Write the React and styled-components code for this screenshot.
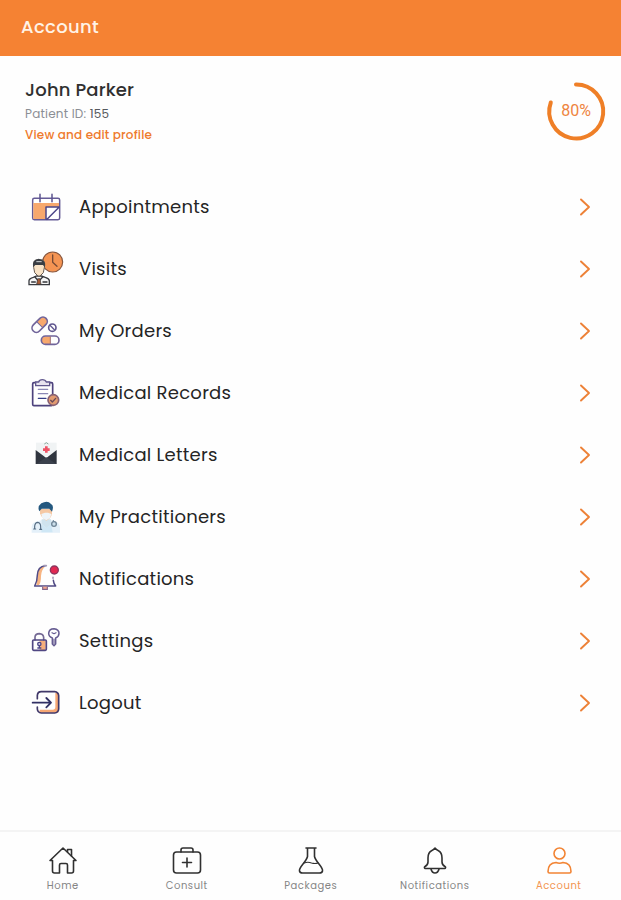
import React from 'react';
import styled, { createGlobalStyle } from 'styled-components';

const Global = createGlobalStyle`
  *, *::before, *::after { box-sizing: border-box; }
  body { margin: 0; background: #fefefe; font-family: Poppins, Inter, sans-serif; }
`;

const Screen = styled.div`
  display: flex;
  flex-direction: column;
  width: 621px;
  height: 900px;
  overflow: hidden;
`;

const Header = styled.header`
  display: flex;
  align-items: center;
  height: 56px;
  padding: 0 21px 2px;
  background: #f58233;
`;

const Title = styled.h1`
  margin: 0;
  font-size: 18px;
  font-weight: 500;
  line-height: 24px;
  letter-spacing: 0.35px;
  color: #fff3e6;
`;

const Profile = styled.section`
  display: flex;
  justify-content: space-between;
  height: 120px;
  padding: 22px 13px 0 25px;
`;

const Details = styled.div`
  display: flex;
  flex-direction: column;
  align-items: flex-start;
`;

const Name = styled.span`
  font-size: 18px;
  font-weight: 500;
  line-height: 24px;
  letter-spacing: 0.15px;
  color: #303030;
`;

const PatientId = styled.span`
  margin-top: 1px;
  font-size: 12px;
  line-height: 22px;
  letter-spacing: 0.2px;
  color: #8b8e94;
`;

const IdValue = styled.span`
  color: #56585d;
`;

const EditLink = styled.a`
  font-size: 12px;
  font-weight: 500;
  line-height: 20px;
  letter-spacing: 0.17px;
  color: #ee7a2c;
`;

const Ring = styled.div`
  display: grid;
  place-items: center;
  width: 64px;
  height: 66px;
  & > * { grid-area: 1 / 1; }
`;

const RingValue = styled.span`
  font-family: Roboto, sans-serif;
  font-size: 16px;
  line-height: 20px;
  color: #ee8440;
`;

const Menu = styled.nav`
  display: flex;
  flex-direction: column;
  flex: 1;
`;

const MenuRow = styled.a`
  display: grid;
  grid-template-columns: 36px 1fr 12px;
  column-gap: 16px;
  align-items: center;
  height: 62px;
  padding: 0 30px 0 27px;
`;

const MenuIcon = styled.svg`
  width: 36px;
  height: 36px;
  overflow: visible;
`;

const MenuLabel = styled.span`
  font-size: 18px;
  line-height: 24px;
  letter-spacing: 0.25px;
  color: #252525;
  padding-bottom: 1px;
`;

const TabBar = styled.footer`
  display: grid;
  grid-template-columns: repeat(5, 1fr);
  height: 70px;
  padding-left: 1px;
  border-top: 2px solid #f4f4f4;
`;

const Tab = styled.a`
  display: flex;
  flex-direction: column;
  align-items: center;
  padding-top: 14px;
  color: ${(p) => (p.$active ? '#f28434' : '#303030')};
`;

const TabIcon = styled.svg`
  width: 30px;
  height: 30px;
`;

const TabLabel = styled.span`
  font-size: 10px;
  line-height: 14px;
  margin-top: 3px;
  letter-spacing: 0.55px;
  margin-right: 0.5px;
  color: ${(p) => (p.$active ? '#f39450' : '#858585')};
`;

const line = { fill: 'none', strokeLinecap: 'round', strokeLinejoin: 'round' };
const navy = '#4b4588';
const peach = '#f7a86d';

const AppointmentsArt = () => (
  <>
    <rect x="53" y="55" width="81" height="64" rx="5" fill="#fff" stroke="#655b96" strokeWidth="4.5" />
    <path d="M55 69H132V81H93V117H55Z" fill={peach} />
    <path d="M94 82H131L95 117Z" fill="#fff" />
    <path d="M93 117V81H132M132 82L96 118" stroke={navy} strokeWidth="4.5" {...line} />
    <path d="M75 43V65M111 43V65" stroke="#5b538e" strokeWidth="4.5" {...line} />
  </>
);

const VisitsArt = () => (
  <>
    <circle cx="113" cy="66" r="30" fill="#f49453" stroke="#86543b" strokeWidth="3.5" />
    <path d="M113 45V67L126 79" stroke="#774a35" strokeWidth="4" {...line} />
    <path d="M42 134V122Q43 115 55 112L65 108H79L91 112Q102 115 103 122V134Z" fill="#f5f5f5" stroke="#393b40" strokeWidth="4" />
    <path d="M56 82Q53 63 63 60H83Q92 66 88 83L85 98L75 108H69L59 98Z" fill="#f8e2c6" stroke="#665a50" strokeWidth="3" />
    <path d="M55 81Q50 59 71 56Q95 59 89 82L84 75H61Z" fill="#393d43" />
    <path d="M64 65H80" stroke="#d2d6d8" strokeWidth="3" />
    <path d="M60 111L71 124L83 111M50 126H61M84 126H96" stroke="#34363a" strokeWidth="4" {...line} />
    <path d="M68 116H75L78 133H65Z" fill="#a75b36" stroke="#34363a" strokeWidth="2" />
  </>
);

const OrdersArt = () => (
  <>
    <g transform="rotate(-45 74 68)">
      <path d="M74 57H89A11 11 0 0 1 89 80H74Z" fill={peach} />
      <rect x="47" y="55" width="54" height="26" rx="13" fill="none" stroke="#70649a" strokeWidth="5" />
      <path d="M74 57V79" stroke="#70649a" strokeWidth="3" />
    </g>
    <circle cx="112" cy="77" r="11" fill="#fff" stroke="#60578f" strokeWidth="5" />
    <path d="M105 70L119 84" stroke="#60578f" strokeWidth="4" />
    <path d="M106 103H91A11 11 0 0 0 91 126H106Z" fill={peach} />
    <rect x="79" y="102" width="53" height="25" rx="12.5" fill="none" stroke="#70649a" strokeWidth="5" />
    <path d="M106 103V126" stroke="#a06f78" strokeWidth="3" />
  </>
);

const RecordsArt = () => (
  <>
    <rect x="53" y="56" width="60" height="69" rx="4" fill="#fff" stroke="#4d427d" strokeWidth="5" />
    <path d="M62 54H71Q73 47 82 47Q91 47 94 54H104V65H62Z" fill="#e8e4ef" stroke="#62598e" strokeWidth="4" />
    <path d="M70 76H98M70 89H98" stroke="#8b88b5" strokeWidth="4" {...line} />
    <path d="M70 103H93" stroke="#353e87" strokeWidth="4" {...line} />
    <circle cx="115" cy="108" r="16" fill="#e29a70" stroke="#876072" strokeWidth="5" />
    <path d="M107 109L112 114L122 103" stroke="#684956" strokeWidth="4" {...line} />
  </>
);

const LettersArt = () => (
  <>
    <path d="M63 53H125V93H63Z" fill="#f0f3f4" />
    <path d="M62 75L94 99L125 75V117H62Z" fill="#30353f" />
    <path d="M64 117L94 97L124 117Z" fill="#3b414c" />
    <path d="M90 64H98V70H104V78H98V83H90V78H84V70H90Z" fill="#ee5365" />
    <path d="M88 57L94 53L100 57" stroke="#84a699" strokeWidth="3" fill="none" />
  </>
);

const PractitionersArt = () => (
  <>
    <path d="M50 137V119Q51 106 68 103L83 98H105L119 103Q134 107 135 122V137Z" fill="#e4f0f9" />
    <path d="M80 97H108V112L95 124L80 110Z" fill="#cfe3ee" />
    <path d="M80 110L94 123L108 110L113 136H79Z" fill="#cfe7f5" />
    <path d="M75 66H111V79Q109 95 94 101Q80 94 75 79Z" fill="#f5c8a4" />
    <path d="M73 73Q66 59 79 49Q98 39 108 51Q118 55 111 74L103 65H80Z" fill="#24587f" />
    <path d="M79 81L90 77H99L109 81L105 93L94 100L82 93Z" fill="#eff5fa" />
    <path d="M59 126V117Q61 106 68 106Q77 107 77 119V127M56 126H62M74 127H80" stroke="#546c83" strokeWidth="3.5" {...line} />
    <path d="M115 99V107" stroke="#668098" strokeWidth="3" />
    <circle cx="117" cy="111" r="7" fill="#cbdfeb" stroke="#6d8395" strokeWidth="4" />
  </>
);

const NotificationsArt = () => (
  <>
    <path d="M80 53Q69 62 68 80L64 108H72Q78 101 78 81Q80 62 89 54Z" fill="#f7b482" />
    <path d="M91 50Q68 52 67 79Q67 97 59 111H122Q116 104 115 94" stroke="#514a84" strokeWidth="4.5" {...line} />
    <path d="M87 50H94M114 85V88" stroke="#a49bb7" strokeWidth="5" {...line} />
    <path d="M83 113V121H97V113" fill="#f4a58b" stroke="#84658a" strokeWidth="3.5" />
    <circle cx="118" cy="63" r="12" fill="#e22751" stroke="#8b365d" strokeWidth="4" />
  </>
);

const SettingsArt = () => (
  <>
    <path d="M74 91H92V120H74Z" fill="#f5ae7c" />
    <path d="M60 90V81Q61 71 73 71Q85 72 86 82V90" stroke="#746994" strokeWidth="5" {...line} />
    <rect x="53" y="90" width="41" height="31" rx="3" fill="none" stroke="#504783" strokeWidth="5" />
    <circle cx="73" cy="102" r="5" fill="#d2cbe1" stroke={navy} strokeWidth="4" />
    <path d="M73 107V113M67 114H79" stroke={navy} strokeWidth="4" />
    <path d="M112 84Q101 80 101 70Q102 56 117 56Q132 58 132 70Q132 80 122 84V102L117 107L112 102Z" fill="#fff" stroke="#655b91" strokeWidth="4.5" strokeLinejoin="round" />
    <path d="M111 68L117 71L123 68M117 87V102" stroke="#655b91" strokeWidth="3.5" {...line} />
  </>
);

const LogoutArt = () => (
  <>
    <path d="M121 249H130V308H74V299H113Q121 299 121 291Z" fill="#f6a774" />
    <path d="M67 266V256Q68 245 79 245H119Q130 246 131 257V297Q130 308 119 309H79Q68 308 67 297V291" stroke="#403869" strokeWidth="5" {...line} />
    <path d="M53 278H107M94 264L108 278L94 292" stroke="#302f63" strokeWidth="5.5" {...line} />
  </>
);

const menuItems = [
  { label: 'Appointments', Art: AppointmentsArt, top: 27 },
  { label: 'Visits', Art: VisitsArt, top: 33 },
  { label: 'My Orders', Art: OrdersArt, top: 33 },
  { label: 'Medical Records', Art: RecordsArt, top: 33 },
  { label: 'Medical Letters', Art: LettersArt, top: 36 },
  { label: 'My Practitioners', Art: PractitionersArt, top: 36 },
  { label: 'Notifications', Art: NotificationsArt, top: 36 },
  { label: 'Settings', Art: SettingsArt, top: 39 },
  { label: 'Logout', Art: LogoutArt, top: 225 },
];

const tabs = [
  {
    label: 'Home',
    art: (
      <>
        <path d="M2 14.5L15 2L28 14.5H25.5V25Q25.5 27 23.5 27H19.5V19Q19.5 17.5 18 17.5H13Q11.5 17.5 11.5 19V27H6.5Q4.5 27 4.5 25V14.5Z" />
        <path d="M19.5 5.8V3.5H23.5V10" />
      </>
    ),
  },
  {
    label: 'Consult',
    art: (
      <>
        <rect x="1.5" y="6" width="27" height="21" rx="3" />
        <path d="M9 6V4Q9 2 11 2H19Q21 2 21 4V6M15 12V21M10.5 16.5H19.5" />
      </>
    ),
  },
  {
    label: 'Packages',
    art: (
      <>
        <path d="M10 2H20M11.5 2.5V10.5Q11 13 7 18Q3 23 3.5 25Q4 27 6.5 27H23.5Q26 27 26.5 25Q27 23 23 18Q19 13 18.5 10.5V2.5" />
        <path d="M8 17Q12 15.5 15.5 17Q19 18 22 17" strokeWidth="1.2" />
      </>
    ),
  },
  {
    label: 'Notifications',
    art: (
      <>
        <path d="M15 2Q13.5 3.8 11.5 4.7Q8 6.5 8 12V16Q8 19 4.5 21Q4 22.5 6 22.5H24Q26 22.5 25.5 21Q22 19 22 16V12Q22 6.5 18.5 4.7Q16.5 3.8 15 2Z" />
        <path d="M11 23Q12 27 15 27Q18 27 19 23" />
      </>
    ),
  },
  {
    label: 'Account',
    active: true,
    art: (
      <>
        <circle cx="15.5" cy="7.5" r="5.5" />
        <path d="M4 25.5Q4 17 12 16.5Q15.5 18 19 16.5Q27 17 27 25.5Q27 27 25.5 27H5.5Q4 27 4 25.5Z" />
      </>
    ),
  },
];

export default function App() {
  return (
    <>
      <Global />
      <Screen>
        <Header>
          <Title>Account</Title>
        </Header>
        <Profile>
          <Details>
            <Name>John Parker</Name>
            <PatientId>
              Patient ID: <IdValue>155</IdValue>
            </PatientId>
            <EditLink>View and edit profile</EditLink>
          </Details>
          <Ring>
            <svg width="64" height="66" viewBox="0 0 64 66">
              <path d="M32 6.5A27 27 0 1 1 6.8 24.5" stroke="#ef7f27" strokeWidth="4" {...line} />
            </svg>
            <RingValue>80%</RingValue>
          </Ring>
        </Profile>
        <Menu>
          {menuItems.map(({ label, Art, top }) => (
            <MenuRow key={label}>
              <MenuIcon viewBox={`36 ${top} 108 108`}>
                <Art />
              </MenuIcon>
              <MenuLabel>{label}</MenuLabel>
              <svg width="12" height="18" viewBox="0 0 12 18">
                <path d="M2 1.5L10 9L2 16.5" stroke="#ed8137" strokeWidth="1.9" {...line} />
              </svg>
            </MenuRow>
          ))}
        </Menu>
        <TabBar>
          {tabs.map(({ label, active, art }) => (
            <Tab key={label} $active={active}>
              <TabIcon viewBox="0 0 30 30" stroke="currentColor" strokeWidth="1.6" {...line}>
                {art}
              </TabIcon>
              <TabLabel $active={active}>{label}</TabLabel>
            </Tab>
          ))}
        </TabBar>
      </Screen>
    </>
  );
}
